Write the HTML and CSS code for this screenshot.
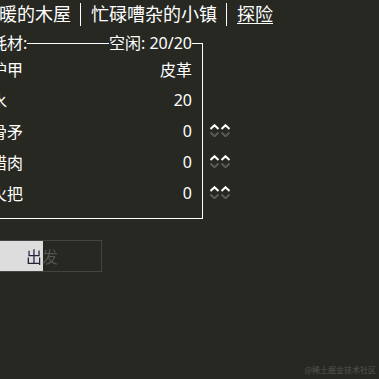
FILE: index.html
```html
<!DOCTYPE html>
<html>
<head>
<meta charset="utf-8">
<link rel="stylesheet" href="styles.css">
</head>
<body>
<div class="main">
  <div class="header">
    <div class="tab first">温暖的木屋</div>
    <div class="tab">忙碌嘈杂的小镇</div>
    <div class="tab selected">探险</div>
  </div>
  <div class="outfit">
    <div class="legend">
      <span class="lbl">耗材:</span>
      <span class="lbl">空闲: 20/20</span>
    </div>
    <div class="row"><span class="name">护甲</span><span class="val">皮革</span><span class="arrows empty"></span></div>
    <div class="row"><span class="name">水</span><span class="val">20</span><span class="arrows empty"></span></div>
    <div class="row"><span class="name">骨矛</span><span class="val">0</span><span class="arrows">
      <svg width="22" height="13" viewBox="0 0 22 13"><path class="up" d="M0.5 5 L4.5 1.2 L8.5 5 M11.5 5 L15.5 1.2 L19.5 5"/><path class="down" d="M0.5 8.5 L4.5 12.3 L8.5 8.5 M11.5 8.5 L15.5 12.3 L19.5 8.5"/></svg></span></div>
    <div class="row"><span class="name">腊肉</span><span class="val">0</span><span class="arrows">
      <svg width="22" height="13" viewBox="0 0 22 13"><path class="up" d="M0.5 5 L4.5 1.2 L8.5 5 M11.5 5 L15.5 1.2 L19.5 5"/><path class="down" d="M0.5 8.5 L4.5 12.3 L8.5 8.5 M11.5 8.5 L15.5 12.3 L19.5 8.5"/></svg></span></div>
    <div class="row"><span class="name">火把</span><span class="val">0</span><span class="arrows">
      <svg width="22" height="13" viewBox="0 0 22 13"><path class="up" d="M0.5 5 L4.5 1.2 L8.5 5 M11.5 5 L15.5 1.2 L19.5 5"/><path class="down" d="M0.5 8.5 L4.5 12.3 L8.5 8.5 M11.5 8.5 L15.5 12.3 L19.5 8.5"/></svg></span></div>
  </div>
  <div class="button">
    <div class="cooldown"></div>
    <span class="btext">出发</span>
  </div>
</div>
<div class="watermark">@稀土掘金技术社区</div>
</body>
</html>
```
FILE: styles.css
```css
html, body {
  margin: 0;
  padding: 0;
  background: #272822;
  height: 100%;
  overflow: hidden;
}
body {
  font-family: "Noto Sans", "Noto Sans CJK SC", sans-serif;
  color: #ffffff;
}
.main {
  margin-left: -20px;
  width: 300px;
}
.header {
  display: flex;
  padding-top: 3px;
  height: 23px;
}
.tab {
  font-size: 18px;
  line-height: 23px;
  padding: 0 9px 0 10px;
  border-left: 1px solid #ffffff;
  white-space: nowrap;
}
.tab.first {
  border-left: none;
  padding-left: 1px;
}
.tab.selected {
  text-decoration: underline;
  text-underline-offset: 2px;
}
.outfit {
  margin-top: 17px;
  width: 201px;
  border: 1px solid #ffffff;
  padding: 0 10px 10px 10px;
  font-size: 16px;
}
.legend {
  display: flex;
  justify-content: space-between;
  margin-top: -12px;
  height: 21px;
  line-height: 22px;
}
.lbl {
  background: #272822;
}
.row {
  display: flex;
  align-items: center;
  height: 31px;
}
.name {
  flex: 1;
}
.arrows {
  width: 22px;
  height: 13px;
  margin-left: 18px;
  margin-right: -40px;
  display: flex;
}
.arrows svg {
  display: block;
}
.up {
  fill: none;
  stroke: #ffffff;
  stroke-width: 2;
}
.down {
  fill: none;
  stroke: #5a5a56;
  stroke-width: 2;
}
.button {
  position: relative;
  margin-top: 21px;
  width: 120px;
  height: 30px;
  border: 1px solid #45453f;
  display: flex;
  align-items: center;
  justify-content: center;
  font-size: 16px;
}
.cooldown {
  position: absolute;
  left: 0;
  top: 0;
  bottom: 0;
  width: 62px;
  background: #dddddd;
}
.btext {
  position: relative;
  padding-left: 2px;
  color: transparent;
  background: linear-gradient(to right, #22223a 0, #22223a 16px, #55554f 16px, #55554f 100%);
  -webkit-background-clip: text;
  background-clip: text;
}
.watermark {
  position: absolute;
  right: 3px;
  bottom: 4px;
  font-size: 8px;
  color: #55554f;
  font-family: "Noto Sans CJK SC", sans-serif;
}
```
